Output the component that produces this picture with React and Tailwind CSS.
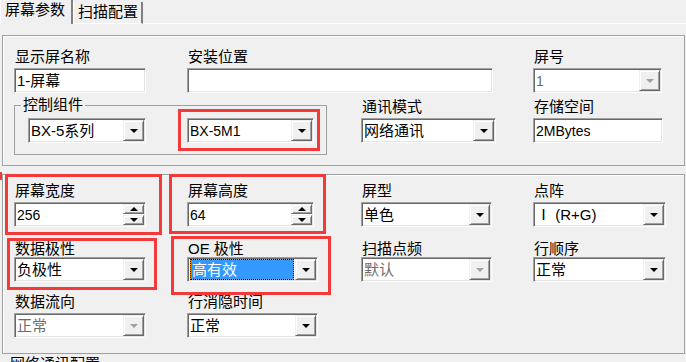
import React from 'react';

// Classic Windows-style "屏幕参数" settings page

const sunken =
  'h-[25px] bg-white border border-t-[#a0a0a0] border-l-[#a0a0a0] border-r-white border-b-white shadow-[inset_1px_1px_0_#696969,inset_-1px_-1px_0_#e3e3e3] flex items-center';

const raised =
  'bg-[#f0f0f0] border border-t-[#f0f0f0] border-l-[#f0f0f0] border-r-[#696969] border-b-[#696969] shadow-[inset_1px_1px_0_#fff,inset_-1px_-1px_0_#a0a0a0] flex items-center justify-center';

const Arrow = ({ up = false, disabled = false }) => (
  <div
    className={
      up
        ? 'w-0 h-0 border-l-[4px] border-r-[4px] border-b-[4px] border-l-transparent border-r-transparent border-b-black'
        : disabled
        ? 'w-0 h-0 border-l-[4px] border-r-[4px] border-t-[4px] border-l-transparent border-r-transparent border-t-[#a0a0a0]'
        : 'w-0 h-0 border-l-[4px] border-r-[4px] border-t-[4px] border-l-transparent border-r-transparent border-t-black'
    }
  />
);

const Label = ({ children, low = false }) => (
  <div className={low ? 'h-[19px] pt-[3px] leading-4 whitespace-nowrap pl-[1px]' : 'h-4 leading-4 mb-[3px] whitespace-nowrap pl-[1px]'}>
    {children}
  </div>
);

const TextBox = ({ value, latin = false }) => (
  <div className={sunken}>
    <span className={`pl-[2px] leading-none whitespace-nowrap ${latin ? 'text-[14px]' : ''}`}>{value}</span>
  </div>
);

const Select = ({ value, disabled = false, selected = false, latin = false }) => (
  <div className={sunken}>
    {selected ? (
      <div className="flex-1 h-[21px] ml-[2px] mr-[1px] bg-[#ff9900] border border-dotted border-black">
        <div className="h-full bg-[#3399ff] text-white flex items-center pl-[1px] leading-none">{value}</div>
      </div>
    ) : (
      <span
        className={`flex-1 pl-[2px] leading-none whitespace-nowrap ${disabled ? 'text-[#6d6d6d]' : ''} ${
          latin ? 'text-[14px]' : ''
        }`}
      >
        {value}
      </span>
    )}
    <div className={`w-[21px] h-[21px] mr-[1px] shrink-0 ${raised}`}>
      <Arrow disabled={disabled} />
    </div>
  </div>
);

const Spin = ({ value }) => (
  <div className={sunken}>
    <span className="flex-1 pl-[2px] leading-none text-[14px]">{value}</span>
    <div className="w-[21px] h-[21px] mr-[1px] flex flex-col gap-[1px] shrink-0">
      <div className={`h-[10px] ${raised}`}>
        <Arrow up />
      </div>
      <div className={`h-[10px] ${raised}`}>
        <Arrow />
      </div>
    </div>
  </div>
);

// red annotation rectangle drawn over a control
const Mark = ({ className }) => (
  <div className={`absolute border-[3px] border-[#f33a3a] pointer-events-none ${className}`} />
);

export default function App() {
  return (
    <div className="relative w-[686px] h-[362px] overflow-hidden bg-[#f0f0f0] text-black text-[15px] font-[family-name:'Liberation_Sans','Noto_Sans_CJK_SC',sans-serif]">
      {/* tabs */}
      <div className="flex items-end h-6">
        <div className="w-[73px] h-6 border-l border-l-white border-r-2 border-r-[#808080] flex items-start pl-[4px] pt-[2px] leading-4">
          屏幕参数
        </div>
        <div className="w-[70px] h-[22px] border-l border-l-white border-r-2 border-r-[#808080] border-b border-b-white flex items-start pl-[4px] pt-[2px] leading-4">
          扫描配置
        </div>
        <div className="flex-1 h-[1px] bg-white" />
      </div>

      {/* panel 1 */}
      <div className="ml-[2px] mt-[11px] w-[683px] h-[131px] border border-[#a0a0a0] shadow-[inset_1px_1px_0_#fff] pt-[13px]">
        <div className="flex">
          <div className="ml-[11px] w-[132px]">
            <Label>显示屏名称</Label>
            <TextBox value="1-屏幕" />
          </div>
          <div className="ml-[41px] w-[306px]">
            <Label>安装位置</Label>
            <TextBox value="" />
          </div>
          <div className="ml-[40px] w-[129px]">
            <Label>屏号</Label>
            <Select value="1" disabled latin />
          </div>
        </div>
        <div className="flex mt-[6px]">
          <fieldset className="ml-[11px] w-[313px] h-[56px] border border-[#a0a0a0] p-0 m-0">
            <legend className="ml-[6px] px-[2px] leading-[12px]">控制组件</legend>
            <div className="flex pl-[13px] pt-[7px]">
              <div className="w-[118px]">
                <Select value="BX-5系列" />
              </div>
              <div className="relative ml-[41px] w-[127px]">
                <Mark className="-left-[9px] -top-[9px] -right-[6px] -bottom-[8px]" />
                <Select value="BX-5M1" latin />
              </div>
            </div>
          </fieldset>
          <div className="ml-[34px] w-[135px]">
            <Label>通讯模式</Label>
            <Select value="网络通讯" />
          </div>
          <div className="ml-[37px] w-[130px]">
            <Label>存储空间</Label>
            <TextBox value="2MBytes" latin />
          </div>
        </div>
      </div>

      {/* panel 2 */}
      <div className="ml-[2px] mt-[8px] w-[683px] h-[180px] border border-[#a0a0a0] shadow-[inset_1px_1px_0_#fff] pt-[8px]">
        <div className="flex">
          <div className="relative ml-[11px] w-[132px]">
            <Mark className="-left-[9px] -top-[9px] -right-[16px] -bottom-[8px]" />
            <Label>屏幕宽度</Label>
            <Spin value="256" />
          </div>
          <div className="relative ml-[41px] w-[127px]">
            <Mark className="-left-[18px] -top-[9px] -right-[12px] -bottom-[7px]" />
            <Label>屏幕高度</Label>
            <Spin value="64" />
          </div>
          <div className="ml-[47px] w-[131px]">
            <Label>屏型</Label>
            <Select value="单色" />
          </div>
          <div className="ml-[41px] w-[133px]">
            <Label>点阵</Label>
            <Select value="Ⅰ (R+G)" />
          </div>
        </div>
        <div className="flex mt-[11px]">
          <div className="relative ml-[11px] w-[132px]">
            <Mark className="-left-[7px] top-0 -right-[11px] -bottom-[8px]" />
            <Label low>数据极性</Label>
            <Select value="负极性" />
          </div>
          <div className="relative ml-[41px] w-[131px]">
            <Mark className="-left-[16px] -top-[2px] -right-[13px] -bottom-[13px]" />
            <Label low>OE 极性</Label>
            <Select value="高有效" selected />
          </div>
          <div className="ml-[43px] w-[131px]">
            <Label low>扫描点频</Label>
            <Select value="默认" disabled />
          </div>
          <div className="ml-[41px] w-[133px]">
            <Label low>行顺序</Label>
            <Select value="正常" />
          </div>
        </div>
        <div className="flex mt-[12px]">
          <div className="ml-[11px] w-[132px]">
            <Label>数据流向</Label>
            <Select value="正常" disabled />
          </div>
          <div className="ml-[41px] w-[131px]">
            <Label>行消隐时间</Label>
            <Select value="正常" />
          </div>
        </div>
      </div>

      <div className="ml-[10px] mt-[2px] leading-4">网络通讯配置</div>

      <div className="absolute left-0 top-[172px] w-[2px] h-[8px] bg-[#f33a3a]" />
    </div>
  );
}
